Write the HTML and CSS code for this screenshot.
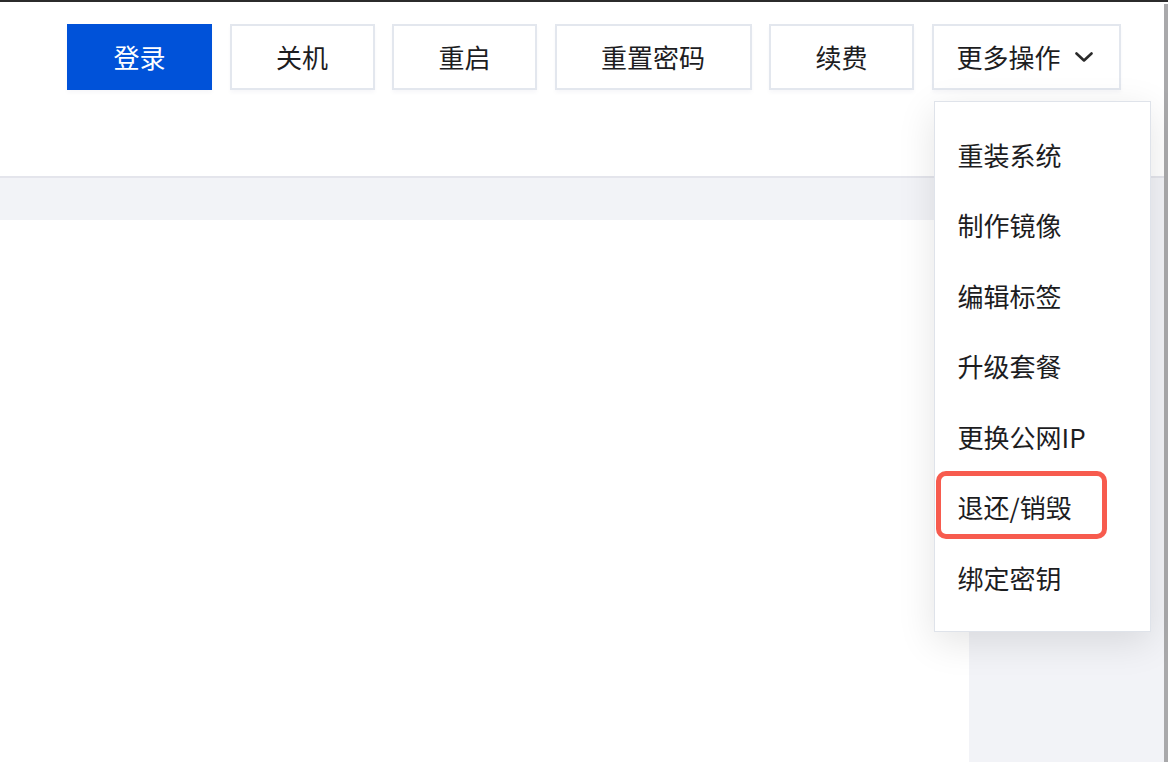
FILE: index.html
```html
<!DOCTYPE html>
<html lang="zh-CN">
<head>
<meta charset="utf-8">
<title>实例操作</title>
<link rel="stylesheet" href="styles.css">
</head>
<body>
<div class="window">
  <div class="main">
    <div class="toolbar">
      <button class="btn btn-primary">登录</button>
      <button class="btn">关机</button>
      <button class="btn">重启</button>
      <button class="btn">重置密码</button>
      <button class="btn">续费</button>
      <div class="more-wrap">
        <button class="btn btn-more">更多操作
          <svg class="chev" width="18" height="10" viewBox="0 0 18 10"><path d="M1.5 1.5 L9 8.5 L16.5 1.5" fill="none" stroke="#2b2b2b" stroke-width="2.6" stroke-linecap="round" stroke-linejoin="round"/></svg>
        </button>
        <ul class="menu">
          <li class="menu-item">重装系统</li>
          <li class="menu-item">制作镜像</li>
          <li class="menu-item">编辑标签</li>
          <li class="menu-item">升级套餐</li>
          <li class="menu-item">更换公网IP</li>
          <li class="menu-item highlighted">退还/销毁<span class="mark"></span></li>
          <li class="menu-item">绑定密钥</li>
        </ul>
      </div>
    </div>
    <div class="band"></div>
    <div class="content">
      <div class="panel"></div>
      <div class="aside"></div>
    </div>
  </div>
  <div class="edge"></div>
</div>
</body>
</html>
```
FILE: styles.css
```css
* { box-sizing: border-box; }
html, body {
  margin: 0;
  padding: 0;
  width: 1168px;
  height: 762px;
  overflow: hidden;
  background: #ffffff;
  font-family: "Noto Sans CJK SC", "Noto Sans", sans-serif;
}
.window {
  display: flex;
  height: 762px;
  border-top: 2px solid #2b2b2b;
}
.main {
  flex: 1;
  display: flex;
  flex-direction: column;
  min-width: 0;
}
.edge {
  width: 4px;
  margin-top: 2px;
  background: #a9a9ab;
}
.toolbar {
  height: 176px;
  flex: none;
  padding: 22px 0 0 67px;
  display: flex;
  align-items: flex-start;
  gap: 17.5px;
  border-bottom: 2px solid #e4e5ec;
}
.btn {
  height: 66px;
  padding: 0 44.5px 1px;
  border: 2px solid #e3e7ee;
  background: #ffffff;
  color: #1d1d1f;
  font-family: inherit;
  font-size: 26px;
  line-height: 1;
  display: flex;
  align-items: center;
  box-shadow: 0 3px 4px rgba(0, 30, 80, 0.03);
  cursor: pointer;
}
.btn-primary {
  background: #0052d9;
  border-color: #0052d9;
  color: #ffffff;
}
.more-wrap {
  position: relative;
}
.btn-more {
  padding: 0 26px 1px 23px;
  gap: 14px;
}
.chev { display: block; }
.menu {
  position: absolute;
  top: 77px;
  left: 2px;
  width: 217px;
  height: 531px;
  margin: 0;
  padding: 17px 0 0 0;
  list-style: none;
  background: #ffffff;
  border: 1px solid #dfe3ea;
  box-shadow: 0 10px 36px rgba(0, 0, 0, 0.11);
  z-index: 10;
}
.menu-item {
  position: relative;
  height: 70.5px;
  padding-left: 23px;
  display: flex;
  align-items: center;
  font-size: 26px;
  color: #1d1d1f;
}
.mark {
  position: absolute;
  top: -1px;
  left: 1px;
  width: 171px;
  height: 68px;
  border: 5px solid #f75b4e;
  border-radius: 10px;
}
.band {
  height: 42px;
  flex: none;
  background: #f2f3f7;
}
.content {
  flex: 1;
  display: flex;
}
.panel {
  width: 969px;
  background: #ffffff;
}
.aside {
  flex: 1;
  background: #f2f3f7;
}
```
